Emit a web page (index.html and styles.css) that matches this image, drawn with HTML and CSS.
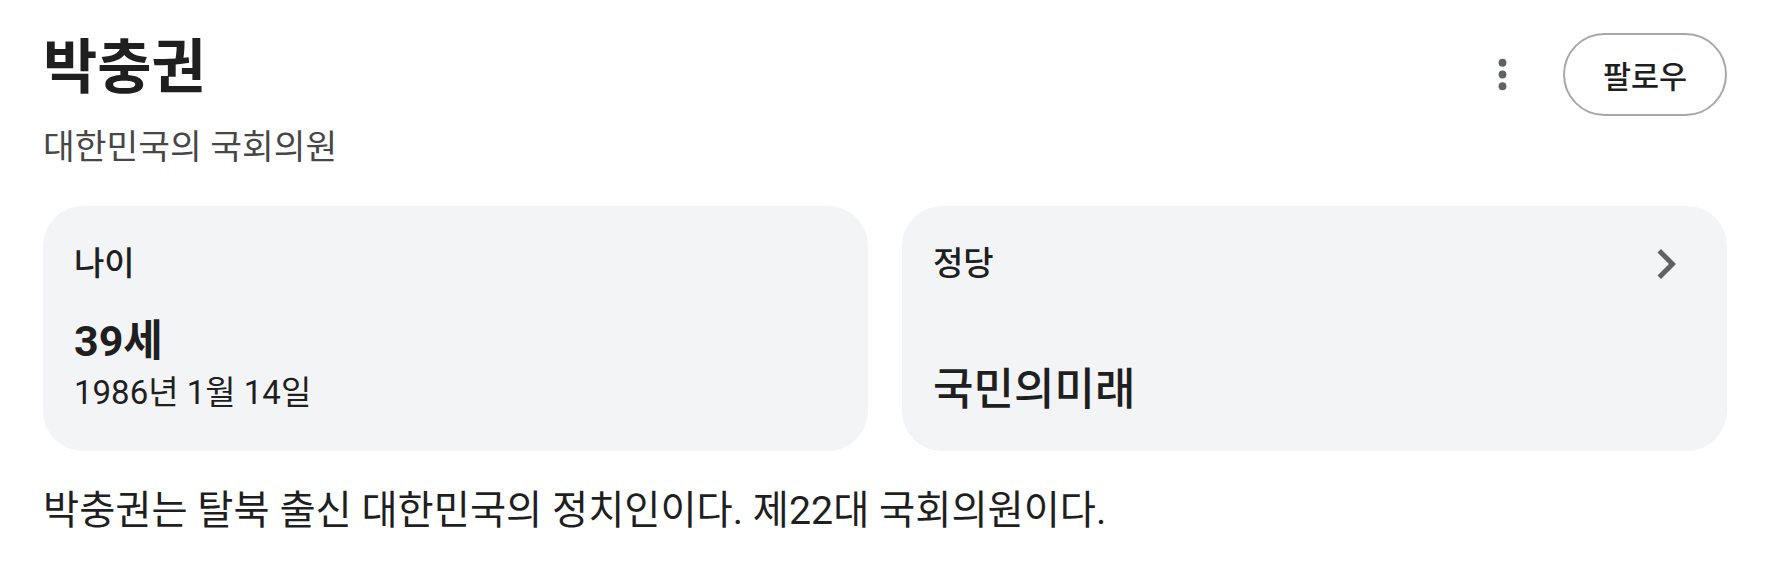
FILE: index.html
```html
<!DOCTYPE html>
<html lang="ko">
<head>
<meta charset="utf-8">
<title>박충권</title>
<link rel="stylesheet" href="styles.css">
</head>
<body>
<main class="panel">
  <header class="panel-head">
    <div class="identity">
      <h1 class="name">박충권</h1>
      <p class="role">대한민국의 국회의원</p>
    </div>
    <div class="actions">
      <button class="icon-btn" aria-label="더보기">
        <svg viewBox="0 0 24 24" width="47" height="47" aria-hidden="true">
          <circle cx="12" cy="6" r="2"/>
          <circle cx="12" cy="12" r="2"/>
          <circle cx="12" cy="18" r="2"/>
        </svg>
      </button>
      <button class="follow-btn">팔로우</button>
    </div>
  </header>

  <section class="facts">
    <div class="fact">
      <div class="fact-head">
        <span class="fact-label">나이</span>
      </div>
      <div class="fact-body">
        <div class="fact-value">39세</div>
        <div class="fact-sub">1986년 1월 14일</div>
      </div>
    </div>
    <a class="fact" href="#">
      <div class="fact-head">
        <span class="fact-label">정당</span>
        <svg class="chevron" viewBox="0 0 24 24" width="60" height="60" aria-hidden="true">
          <path d="M10 6L8.59 7.41 13.17 12l-4.58 4.59L10 18l6-6z"/>
        </svg>
      </div>
      <div class="fact-body">
        <div class="fact-value fact-value--party">국민의미래</div>
      </div>
    </a>
  </section>

  <p class="summary">박충권는 탈북 출신 대한민국의 정치인이다. 제22대 국회의원이다.</p>
</main>
</body>
</html>
```

FILE: styles.css
```css
html, body {
  margin: 0;
  background: #ffffff;
}

body {
  font-family: Roboto, "Noto Sans CJK KR", sans-serif;
  color: #1f1f1f;
}

.panel {
  padding: 33px 41px 0 43px;
}

/* header: name + role on the left, menu + follow on the right */
.panel-head {
  display: flex;
  justify-content: space-between;
  align-items: flex-start;
}

.name {
  margin: 0;
  font-size: 59px;
  font-weight: 700;
  line-height: 70px;
  color: #1f1f1f;
}

.role {
  margin: 24px 0 0;
  font-size: 34.5px;
  line-height: 40px;
  color: #474747;
}

.actions {
  display: flex;
  align-items: center;
  gap: 37px;
}

.icon-btn {
  display: flex;
  padding: 0;
  border: 0;
  background: none;
  fill: #5f6368;
}

.follow-btn {
  box-sizing: border-box;
  width: 164px;
  height: 83px;
  border: 2px solid #a8a8a8;
  border-radius: 42px;
  background: #ffffff;
  font-family: inherit;
  font-size: 30.5px;
  font-weight: 500;
  color: #1f1f1f;
}

/* fact cards */
.facts {
  display: grid;
  grid-template-columns: 1fr 1fr;
  gap: 34px;
  margin-top: 39px;
}

.fact {
  display: flex;
  flex-direction: column;
  justify-content: space-between;
  padding: 28px 31px 38px;
  border-radius: 40px;
  background: #f3f4f6;
  color: inherit;
  text-decoration: none;
}

.fact-head {
  display: flex;
  align-items: center;
  justify-content: space-between;
  min-height: 60px;
}

.fact-label {
  font-size: 33px;
  font-weight: 500;
  line-height: 38px;
}

.chevron {
  fill: #5f6368;
}

.fact-body {
  margin-top: 23px;
}

.fact-value {
  font-size: 43px;
  font-weight: 700;
  line-height: 48px;
}

.fact-value--party {
  font-size: 44px;
  font-weight: 500;
  line-height: 46px;
}

.fact-sub {
  margin-top: 8px;
  font-size: 33px;
  line-height: 40px;
}

.summary {
  margin: 36px 0 0;
  font-size: 39.3px;
  line-height: 48px;
}
```
